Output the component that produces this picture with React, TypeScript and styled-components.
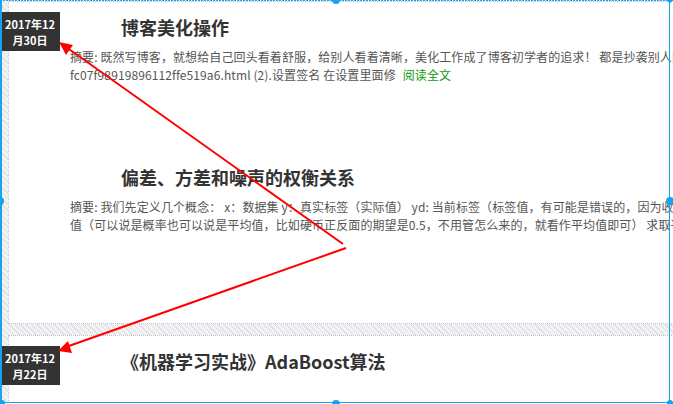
import React from 'react'
import styled, { createGlobalStyle } from 'styled-components'

const GlobalStyle = createGlobalStyle`
  html, body {
    margin: 0;
    padding: 0;
    background: #fff;
  }
  body {
    font-family: 'Noto Sans CJK SC', 'Noto Sans', sans-serif;
  }
`

const Page = styled.div`
  position: relative;
  width: 673px;
  height: 404px;
  overflow: hidden;
  box-sizing: border-box;
  padding: 1px 0 0 8px;
  background: repeating-linear-gradient(
    45deg,
    #f4f4f4 0 2px,
    #e0e0e0 2px 3px,
    #ededed 3px 4px
  );
`

const Day = styled.section`
  position: relative;
  width: 1100px;
  box-sizing: border-box;
  background: #fff;
  border: 1px dotted #b3c2dc;
  padding: 12px 0 0 61px;
  margin-bottom: 11px;
  height: ${(p: { $height: number }) => p.$height}px;
`

const DateBadge = styled.div`
  position: absolute;
  left: -9px;
  top: 10px;
  width: 60px;
  height: 39px;
  background: #333;
  color: #fff;
  font-size: 11px;
  font-weight: 700;
  line-height: 16px;
  text-align: center;
  display: flex;
  flex-direction: column;
  justify-content: center;
`

const Post = styled.article`
  margin-bottom: ${(p: { $gap: number }) => p.$gap}px;
`

const Title = styled.h2`
  margin: 0 0 8px 51px;
  font-size: 18px;
  font-weight: 700;
  line-height: 26px;
  color: #333;
`

const Summary = styled.div`
  font-size: 12px;
  line-height: 18px;
  color: #555;
  white-space: nowrap;
  letter-spacing: 0.1px;
`

const ReadMore = styled.a`
  color: #119911;
  text-decoration: none;
  margin-left: 7px;
`

const Overlay = styled.svg`
  position: absolute;
  left: 0;
  top: 0;
  pointer-events: none;
`

type PostData = {
  title: string
  lines: string[]
  more?: boolean
}

const day1: PostData[] = [
  {
    title: '博客美化操作',
    lines: [
      '摘要: 既然写博客，就想给自己回头看着舒服，给别人看着清晰，美化工作成了博客初学者的追求！ 都是抄袭别人的，这里记录一下操作过程 (1).页面定制CSS代码',
      'fc07f98919896112ffe519a6.html (2).设置签名 在设置里面修',
    ],
    more: true,
  },
  {
    title: '偏差、方差和噪声的权衡关系',
    lines: [
      '摘要: 我们先定义几个概念： x：数据集 y：真实标签（实际值） yd: 当前标签（标签值，有可能是错误的，因为收集数据时可能出错）',
      '值（可以说是概率也可以说是平均值，比如硬币正反面的期望是0.5，不用管怎么来的，就看作平均值即可） 求取平均值',
    ],
  },
]

const day2: PostData[] = [{ title: '《机器学习实战》AdaBoost算法', lines: [] }]

const Frame = () => (
  <Overlay width="673" height="404" viewBox="0 0 673 404">
    <line x1="343" y1="244" x2="66" y2="47" stroke="#f00" strokeWidth="2" />
    <path d="M59 42 L73 45 L66 55 Z" fill="#f00" />
    <line x1="346" y1="248" x2="66" y2="347" stroke="#f00" strokeWidth="2" />
    <path d="M58 351 L68 341 L72 353 Z" fill="#f00" />
    <line x1="0" y1="0.5" x2="673" y2="0.5" stroke="#14a4f0" strokeWidth="1" strokeDasharray="2 1" />
    <line x1="1" y1="0" x2="1" y2="404" stroke="#14a4f0" strokeWidth="2" />
    <line x1="669.5" y1="0" x2="669.5" y2="404" stroke="#14a4f0" strokeWidth="1" />
    <line x1="0" y1="402.5" x2="673" y2="402.5" stroke="#14a4f0" strokeWidth="1" />
    <circle cx="336" cy="0" r="4" fill="#14a4f0" />
    <circle cx="0" cy="201" r="4" fill="#14a4f0" />
    <circle cx="670" cy="201" r="4" fill="#14a4f0" />
    <circle cx="336" cy="404" r="4" fill="#14a4f0" />
    <circle cx="670" cy="0" r="2.5" fill="#14a4f0" />
    <circle cx="2" cy="403" r="3" fill="#14a4f0" />
    <circle cx="670" cy="403" r="3" fill="#14a4f0" />
  </Overlay>
)

const PostBlock = ({ post, gap }: { post: PostData; gap: number }) => (
  <Post $gap={gap}>
    <Title>{post.title}</Title>
    {post.lines.length > 0 && (
      <Summary>
        {post.lines.map((line, i) => (
          <div key={i}>
            {line}
            {post.more && i === post.lines.length - 1 ? <ReadMore href="#">阅读全文</ReadMore> : null}
          </div>
        ))}
      </Summary>
    )}
  </Post>
)

export default function App() {
  return (
    <>
      <GlobalStyle />
      <Page>
        <Day $height={323}>
          <DateBadge>
            <span>2017年12</span>
            <span>月30日</span>
          </DateBadge>
          <PostBlock post={day1[0]} gap={80} />
          <PostBlock post={day1[1]} gap={0} />
        </Day>
        <Day $height={120}>
          <DateBadge>
            <span>2017年12</span>
            <span>月22日</span>
          </DateBadge>
          <PostBlock post={day2[0]} gap={0} />
        </Day>
        <Frame />
      </Page>
    </>
  )
}
